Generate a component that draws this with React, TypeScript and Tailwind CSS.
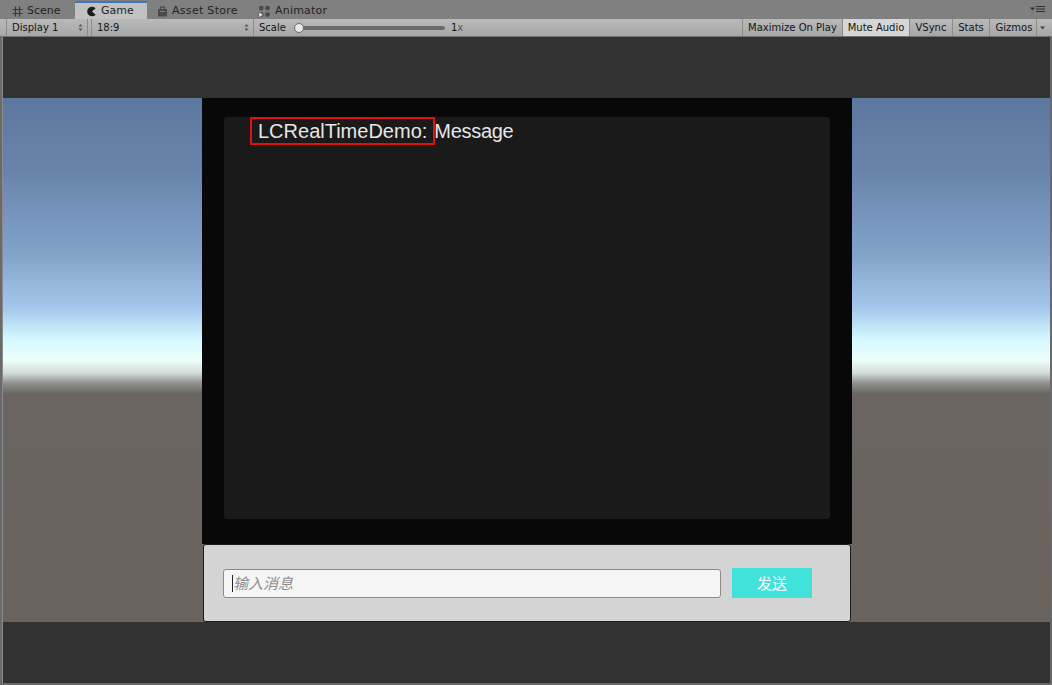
import React from 'react'

const SKY =
  'bg-[linear-gradient(to_bottom,#5d789f_0%,#6884ad_14%,#83a3cb_30%,#a5c6ec_40%,#d3f8ff_46%,#edfffb_50%,#d3dcd8_52.5%,#8d8f8b_54.5%,#6b6561_56.5%,#6a625d_100%)]'

const TOOL_BUTTONS = [
  { label: 'Maximize On Play', w: 'w-[100px]', active: false },
  { label: 'Mute Audio', w: 'w-[67px]', active: true },
  { label: 'VSync', w: 'w-[43px]', active: false },
  { label: 'Stats', w: 'w-[37px]', active: false },
]

function GridIcon() {
  return (
    <svg width="11" height="11" viewBox="0 0 11 11" className="shrink-0">
      <path d="M3.5 0.5v10M7.5 0.5v10M0.5 3.5h10M0.5 7.5h10" stroke="#3a3a3a" strokeWidth="1.2" fill="none" />
    </svg>
  )
}

function GameIcon() {
  return (
    <svg width="11" height="11" viewBox="0 0 10 10" className="shrink-0">
      <path d="M8.8 2.1A4.4 4.4 0 1 0 8.8 7.9L5.4 5z" fill="#1c1c1c" />
    </svg>
  )
}

function BagIcon() {
  return (
    <svg width="11" height="11" viewBox="0 0 10 11" className="shrink-0">
      <rect x="0.5" y="3" width="9" height="7.5" fill="#4a4a4a" />
      <path d="M3 3V1.2h4V3" stroke="#4a4a4a" strokeWidth="1.2" fill="none" />
      <path d="M2.5 5.5h5" stroke="#8c8c8c" strokeWidth="0.8" />
    </svg>
  )
}

function AnimatorIcon() {
  return (
    <svg width="13" height="13" viewBox="0 0 12 12" className="shrink-0">
      <circle cx="3" cy="2.8" r="2.2" fill="#4a4a4a" />
      <circle cx="8.8" cy="2.8" r="2.2" fill="#4a4a4a" />
      <circle cx="8.8" cy="8.8" r="2.2" fill="#4a4a4a" />
      <circle cx="3" cy="8.8" r="2.2" fill="#4a4a4a" />
      <path d="M0.8 6.3v5.4l4.2-2.7z" fill="#ededed" stroke="#4a4a4a" strokeWidth="0.6" />
    </svg>
  )
}

function UpDown() {
  return (
    <svg width="5" height="9" viewBox="0 0 5 9" className="shrink-0">
      <path d="M0.5 3.5L2.5 1l2 2.5zM0.5 5.5L2.5 8l2-2.5z" fill="#555" />
    </svg>
  )
}

export default function App() {
  return (
    <div className="w-[1052px] h-[685px] flex flex-col overflow-hidden bg-[#6a6a6a] font-['DejaVu_Sans',sans-serif]">
      {/* Tab strip */}
      <div className="h-[19px] bg-[#808080] flex items-end text-[11px] text-[#242424] relative">
        <div className="flex items-center gap-[4px] h-[17px] pt-[2px] pl-[12px] w-[75px]">
          <GridIcon />
          <span>Scene</span>
        </div>
        <div className="flex items-center gap-[4px] h-[18px] pt-[1px] w-[72px] pl-[11px] bg-[#c2c2c2] border-t-2 border-[#3c75c6]">
          <GameIcon />
          <span>Game</span>
        </div>
        <div className="flex items-center gap-[4px] h-[17px] pt-[2px] pl-[10px] w-[111px]">
          <BagIcon />
          <span className="tracking-[0.3px]">Asset Store</span>
        </div>
        <div className="flex items-center gap-[4px] h-[17px] pt-[2px]">
          <AnimatorIcon />
          <span className="tracking-[0.2px]">Animator</span>
        </div>
        <div className="absolute right-[7px] top-[5px] flex items-center gap-[1px]">
          <svg width="5" height="4" viewBox="0 0 5 4">
            <path d="M0 0.5h5L2.5 3.5z" fill="#2e2e2e" />
          </svg>
          <svg width="9" height="8" viewBox="0 0 9 8">
            <path d="M0 1.5h9M0 4h9M0 6.5h9" stroke="#2e2e2e" strokeWidth="1.1" />
          </svg>
        </div>
      </div>

      {/* Toolbar */}
      <div className="h-[18px] bg-[linear-gradient(to_bottom,#b9b9b9,#a7a7a7)] border-b border-[#707070] flex items-stretch text-[10px] text-[#141414]">
        <div className="w-[7px] border-r border-[#8b8b8b]" />
        <div className="w-[81px] flex items-center justify-between pl-[5px] pr-[4px] border-r border-[#8b8b8b]">
          <span>Display 1</span>
          <UpDown />
        </div>
        <div className="w-[163px] flex items-center justify-between pl-[5px] pr-[4px] border-r border-[#8b8b8b] ml-[3px] border-l">
          <span>18:9</span>
          <UpDown />
        </div>
        <div className="flex items-center pl-[5px]">
          <span>Scale</span>
          <div className="relative ml-[9px] w-[150px] h-[4px] rounded-full bg-[#6b6b6b]">
            <div className="absolute -left-[1px] -top-[3px] w-[10px] h-[10px] rounded-full bg-[#e9e9e9] border border-[#6a6a6a]" />
          </div>
          <span className="ml-[6px]">
            1<span className="text-[#555]">x</span>
          </span>
        </div>
        <div className="flex-1" />
        <div className="flex items-stretch border-l border-[#8b8b8b]">
          {TOOL_BUTTONS.map((b) => (
            <div
              key={b.label}
              className={`${b.w} flex items-center justify-center border-r border-[#8b8b8b] ${b.active ? 'bg-[#d6d6d6]' : ''}`}
            >
              {b.label}
            </div>
          ))}
          <div className="w-[46px] flex items-center justify-center pl-[2px]">Gizmos</div>
          <div className="w-[12px] flex items-center justify-center border-l border-[#8b8b8b]">
            <svg width="5" height="4" viewBox="0 0 5 4">
              <path d="M0 0.5h5L2.5 3.5z" fill="#444" />
            </svg>
          </div>
          <div className="w-[4px]" />
        </div>
      </div>

      {/* Game view */}
      <div className="flex-1 mx-[2px] mb-[2px] bg-[#323232] flex flex-col border-l border-[#8a8a8a]">
        <div className="h-[61px]" />
        <div className={`h-[524px] flex ${SKY}`}>
          <div className="w-[199px]" />
          <div className="w-[650px] flex flex-col">
            <div className="h-[446px] bg-[#080808] px-[22px] pt-[21px] pb-[23px]">
              <div className="h-full bg-[#1a1a1a] rounded-[3px] pl-[34px]">
                <div className="flex items-center -mt-[2px] font-['Liberation_Sans',sans-serif] text-[20px] text-[#e6e6e6] leading-[22px]">
                  <span className="border-2 border-[#e21010] pl-[6px] pr-[6px] py-[1px] -ml-[8px]">LCRealTimeDemo:</span>
                  <span className="-ml-[1px] tracking-[-0.3px]">Message</span>
                </div>
              </div>
            </div>
            <div className="flex-1 bg-[#d4d4d4] rounded-[3px] border border-[#1b1b1b] ml-[1px] mr-[1px] flex items-center pl-[19px]">
              <div className="w-[498px] h-[29px] bg-[#f5f5f5] border border-[#8a8a8a] rounded-[3px] flex items-center pl-[8px]">
                <span className="w-px h-[17px] bg-[#222]" />
                <span className="italic text-[#8e8e8e] text-[15px] font-['Noto_Sans_CJK_SC',sans-serif]">输入消息</span>
              </div>
              <div className="ml-[11px] w-[80px] h-[30px] bg-[#40e2da] flex items-center justify-center text-white text-[15px] font-['Noto_Sans_CJK_SC',sans-serif]">
                发送
              </div>
            </div>
          </div>
        </div>
        <div className="flex-1" />
      </div>
    </div>
  )
}
